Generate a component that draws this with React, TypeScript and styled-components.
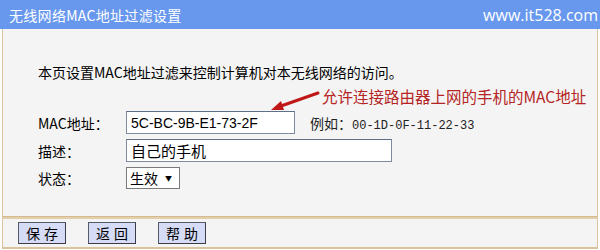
import * as React from "react";
import styled, { createGlobalStyle } from "styled-components";

const GlobalStyle = createGlobalStyle`
  html, body {
    margin: 0;
    padding: 0;
    background: #ffffff;
  }
`;

const cjk = `"Noto Sans CJK SC", "Noto Sans", sans-serif`;

const Frame = styled.div`
  position: relative;
  width: 596px;
  margin-left: 2px;
  height: 249px;
  display: flex;
  flex-direction: column;
  font-family: ${cjk};
  color: #000;
`;

const TitleBar = styled.div`
  height: 29px;
  background: #6898ee;
  display: flex;
  align-items: center;
  justify-content: space-between;
  padding: 0 2px 0 9px;
  margin-left: -2px;
  margin-right: -2px;
`;

const Title = styled.span`
  font-size: 14px;
  color: #ffffff;
  letter-spacing: 0.3px;
`;

const Watermark = styled.span`
  font-family: "Open Sans", "Noto Sans", sans-serif;
  font-size: 16px;
  color: #ffffff;
`;

const Panel = styled.div`
  flex: 1;
  background: #f4f4f4;
  border-left: 1px solid #d8c39c;
  border-right: 1px solid #d8c39c;
  padding: 32px 0 0 35px;
  display: flex;
  flex-direction: column;
`;

const Intro = styled.p`
  margin: 0 0 28px;
  font-size: 14px;
  line-height: 22px;
`;

const Form = styled.div`
  display: grid;
  grid-template-columns: 88px auto;
  row-gap: 5px;
  align-items: center;
`;

const Label = styled.span`
  font-size: 14px;
  line-height: 22px;
`;

const Field = styled.div`
  display: flex;
  align-items: center;
  gap: 15px;
`;

const TextBox = styled.div<{ $width: number; $cjk?: boolean }>`
  box-sizing: border-box;
  width: ${({ $width }) => $width}px;
  height: 23px;
  border: 1px solid #7c8ba0;
  border-top-color: #5f6f86;
  background: #ffffff;
  padding: 0 4px;
  display: flex;
  align-items: center;
  font-family: ${({ $cjk }) =>
    $cjk ? cjk : `"Liberation Sans", Arial, sans-serif`};
  font-size: ${({ $cjk }) => ($cjk ? 15 : 14)}px;
`;

const Hint = styled.span`
  font-size: 14px;
  color: #222;
`;

const HintCode = styled.span`
  font-family: "Liberation Mono", monospace;
  font-size: 12px;
  color: #222;
`;

const Select = styled.div`
  box-sizing: border-box;
  width: 54px;
  height: 22px;
  border: 1px solid #7a7a7a;
  background: #ffffff;
  display: flex;
  align-items: center;
  padding-left: 3px;
  gap: 7px;
  font-size: 14px;
`;

const Caret = styled.span`
  font-size: 7px;
  line-height: 1;
`;

const Divider = styled.div`
  height: 2px;
  background: #e4cfa8;
  border-top: 1px solid #d2bb92;
`;

const ButtonBar = styled.div`
  height: 28px;
  background: #f4f4f4;
  border-left: 1px solid #d8c39c;
  border-right: 1px solid #d8c39c;
  border-bottom: 2px solid #d8c39c;
  display: flex;
  align-items: center;
  gap: 22px;
  padding-left: 15px;
`;

const Button = styled.button`
  box-sizing: border-box;
  width: 48px;
  height: 22px;
  padding: 0;
  border: 1px solid #555a6a;
  border-right-color: #3c3c48;
  border-bottom-color: #3c3c48;
  background: #d6dbf6;
  font-family: ${cjk};
  font-size: 14px;
  letter-spacing: 4px;
  text-indent: 4px;
  color: #000;
`;

const Note = styled.div`
  position: absolute;
  left: 266px;
  top: 86px;
  display: flex;
  align-items: flex-start;
`;

const ArrowSvg = styled.svg`
  margin-top: 4px;
  flex: none;
`;

const NoteText = styled.span`
  font-size: 15.5px;
  color: #b52424;
  line-height: 20px;
`;

const Arrow = () => (
  <ArrowSvg width="54" height="24" viewBox="0 0 54 24">
    <path d="M50 3 L13 16" stroke="#c01818" strokeWidth="3" strokeLinecap="round" />
    <path d="M3 20 L13 11 L16 20 Z" fill="#c01818" />
  </ArrowSvg>
);

export default function App() {
  return (
    <>
      <GlobalStyle />
      <Frame>
        <TitleBar>
          <Title>无线网络MAC地址过滤设置</Title>
          <Watermark>www.it528.com</Watermark>
        </TitleBar>
        <Panel>
          <Intro>本页设置MAC地址过滤来控制计算机对本无线网络的访问。</Intro>
          <Form>
            <Label>MAC地址：</Label>
            <Field>
              <TextBox $width={169}>5C-BC-9B-E1-73-2F</TextBox>
              <Hint>
                例如：<HintCode>00-1D-0F-11-22-33</HintCode>
              </Hint>
            </Field>
            <Label>描述：</Label>
            <Field>
              <TextBox $width={266} $cjk>
                自己的手机
              </TextBox>
            </Field>
            <Label>状态：</Label>
            <Field>
              <Select>
                生效 <Caret>▼</Caret>
              </Select>
            </Field>
          </Form>
        </Panel>
        <Divider />
        <ButtonBar>
          <Button>保存</Button>
          <Button>返回</Button>
          <Button>帮助</Button>
        </ButtonBar>
        <Note>
          <Arrow />
          <NoteText>允许连接路由器上网的手机的MAC地址</NoteText>
        </Note>
      </Frame>
    </>
  );
}
